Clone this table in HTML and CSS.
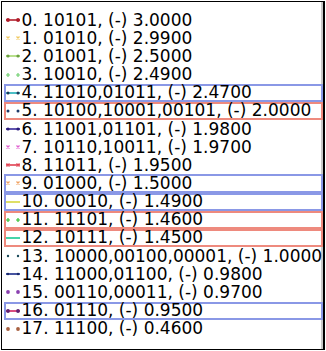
FILE: index.html
```html
<!DOCTYPE html>
<html>
<head>
<meta charset="utf-8">
<link rel="stylesheet" href="styles.css">
</head>
<body>
<div class="legend">
  <div class="row"><svg class="mk" viewBox="0 0 16 8"><line x1="1" y1="4" x2="15" y2="4" stroke="#b01c2a" stroke-width="1.6"/><circle cx="3" cy="4" r="1.9" fill="#b01c2a"/><circle cx="13" cy="4" r="1.9" fill="#b01c2a"/></svg><span>0. 10101, (-) 3.0000</span></div>
  <div class="row"><svg class="mk" viewBox="0 0 16 8"><path d="M1.5 2.5l3 3M4.5 2.5l-3 3M11.5 2.5l3 3M14.5 2.5l-3 3" stroke="#f0c860" stroke-width="1.3"/></svg><span>1. 01010, (-) 2.9900</span></div>
  <div class="row"><svg class="mk" viewBox="0 0 16 8"><line x1="1" y1="4" x2="15" y2="4" stroke="#a8d870" stroke-width="1.6"/><circle cx="3" cy="4" r="1.6" fill="#6aa040"/><circle cx="13" cy="4" r="1.6" fill="#6aa040"/></svg><span>2. 01001, (-) 2.5000</span></div>
  <div class="row"><svg class="mk" viewBox="0 0 16 8"><path d="M3 2v4M1 4h4M13 2v4M11 4h4" stroke="#70d070" stroke-width="1.2"/></svg><span>3. 10010, (-) 2.4900</span></div>
  <div class="row blue"><svg class="mk" viewBox="0 0 16 8"><line x1="1" y1="4" x2="15" y2="4" stroke="#20b0b8" stroke-width="1.6"/><circle cx="3" cy="4" r="1.5" fill="#1c3a5a"/><circle cx="13" cy="4" r="1.5" fill="#1c3a5a"/></svg><span>4. 11010,01011, (-) 2.4700</span></div>
  <div class="row red"><svg class="mk" viewBox="0 0 16 8"><circle cx="3" cy="4" r="1.5" fill="#1c3a6a"/><circle cx="13" cy="4" r="1.5" fill="#1c3a6a"/></svg><span>5. 10100,10001,00101, (-) 2.0000</span></div>
  <div class="row"><svg class="mk" viewBox="0 0 16 8"><line x1="1" y1="4" x2="15" y2="4" stroke="#3a2a9a" stroke-width="1.6"/><circle cx="3" cy="4" r="1.6" fill="#2a1a7a"/><circle cx="13" cy="4" r="1.6" fill="#2a1a7a"/></svg><span>6. 11001,01101, (-) 1.9800</span></div>
  <div class="row"><svg class="mk" viewBox="0 0 16 8"><path d="M1.5 2.5l3 3M4.5 2.5l-3 3M11.5 2.5l3 3M14.5 2.5l-3 3" stroke="#e060d0" stroke-width="1.3"/></svg><span>7. 10110,10011, (-) 1.9700</span></div>
  <div class="row"><svg class="mk" viewBox="0 0 16 8"><line x1="1" y1="4" x2="15" y2="4" stroke="#e04050" stroke-width="1.6"/><path d="M1.5 2.5l3 3M4.5 2.5l-3 3M11.5 2.5l3 3M14.5 2.5l-3 3" stroke="#e04050" stroke-width="1.2"/></svg><span>8. 11011, (-) 1.9500</span></div>
  <div class="row blue"><svg class="mk" viewBox="0 0 16 8"><path d="M1.5 2.5l3 3M4.5 2.5l-3 3M11.5 2.5l3 3M14.5 2.5l-3 3" stroke="#f0a060" stroke-width="1.3"/></svg><span>9. 01000, (-) 1.5000</span></div>
  <div class="row blue"><svg class="mk" viewBox="0 0 16 8"><line x1="1" y1="4" x2="15" y2="4" stroke="#d8d840" stroke-width="1.6"/></svg><span>10. 00010, (-) 1.4900</span></div>
  <div class="row red"><svg class="mk" viewBox="0 0 16 8"><path d="M3 2v4M1 4h4M13 2v4M11 4h4" stroke="#30c030" stroke-width="1.2"/></svg><span>11. 11101, (-) 1.4600</span></div>
  <div class="row red"><svg class="mk" viewBox="0 0 16 8"><line x1="1" y1="4" x2="15" y2="4" stroke="#30d0a0" stroke-width="1.8"/></svg><span>12. 10111, (-) 1.4500</span></div>
  <div class="row"><svg class="mk" viewBox="0 0 16 8"><circle cx="3" cy="4" r="1.2" fill="#1a4a5a"/><circle cx="13" cy="4" r="1.2" fill="#1a4a5a"/></svg><span>13. 10000,00100,00001, (-) 1.0000</span></div>
  <div class="row"><svg class="mk" viewBox="0 0 16 8"><line x1="1" y1="4" x2="15" y2="4" stroke="#1a2a8a" stroke-width="1.6"/><circle cx="3" cy="4" r="1.2" fill="#1a2a6a"/><circle cx="13" cy="4" r="1.2" fill="#1a2a6a"/></svg><span>14. 11000,01100, (-) 0.9800</span></div>
  <div class="row"><svg class="mk" viewBox="0 0 16 8"><circle cx="3" cy="4" r="1.9" fill="#8a40b0"/><circle cx="13" cy="4" r="1.9" fill="#8a40b0"/></svg><span>15. 00110,00011, (-) 0.9700</span></div>
  <div class="row blue"><svg class="mk" viewBox="0 0 16 8"><line x1="1" y1="4" x2="15" y2="4" stroke="#d02060" stroke-width="1.6"/><circle cx="3" cy="4" r="1.9" fill="#602070"/><circle cx="13" cy="4" r="1.9" fill="#602070"/></svg><span>16. 01110, (-) 0.9500</span></div>
  <div class="row"><svg class="mk" viewBox="0 0 16 8"><circle cx="3" cy="4" r="1.9" fill="#a86040"/><circle cx="13" cy="4" r="1.9" fill="#a86040"/></svg><span>17. 11100, (-) 0.4600</span></div>
</div>
</body>
</html>
```
FILE: styles.css
```css
html, body {
  margin: 0;
  padding: 0;
  background: #fff;
}
.legend {
  margin: 1px 0 0 1px;
  width: 324px;
  height: 349px;
  box-sizing: border-box;
  border: 1px solid #000;
  border-right: 2px solid #000;
  box-shadow: inset -2px 0 0 #c8c8c8;
  padding: 9px 0 0 2px;
  font-family: "DejaVu Sans", sans-serif;
  font-size: 17px;
  color: #000;
}
.row {
  display: flex;
  align-items: center;
  height: 18.17px;
  width: 319px;
  box-sizing: border-box;
  border: 2px solid transparent;
  white-space: nowrap;
  line-height: 1;
}
.row.blue { border-color: #8a98e6; }
.row.red { border-color: #ee8a7e; }
.mk {
  width: 16px;
  height: 8px;
  flex: none;
  margin-left: -1px;
}
.row span {
  margin-left: 0.5px;
}
```
